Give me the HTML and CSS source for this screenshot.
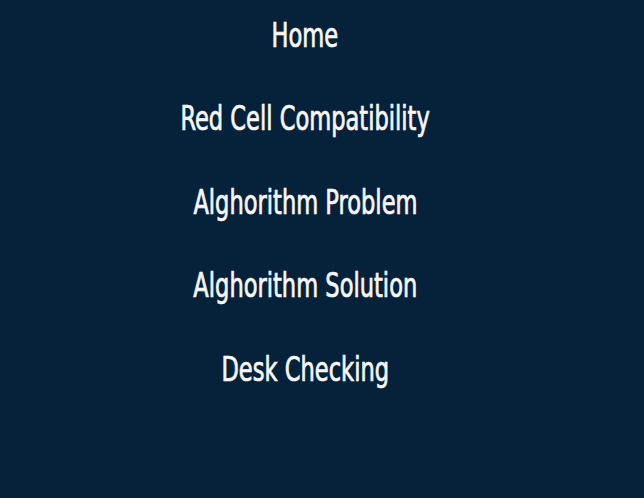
FILE: index.html
```html
<!DOCTYPE html>
<html>
<head>
<meta charset="utf-8">
<title>Menu</title>
<link rel="stylesheet" href="styles.css">
</head>
<body>
<nav class="menu">
  <ul class="menu-list">
    <li class="menu-item"><a class="menu-link" href="#">Home</a></li>
    <li class="menu-item"><a class="menu-link" href="#">Red Cell Compatibility</a></li>
    <li class="menu-item"><a class="menu-link" href="#">Alghorithm Problem</a></li>
    <li class="menu-item"><a class="menu-link" href="#">Alghorithm Solution</a></li>
    <li class="menu-item"><a class="menu-link" href="#">Desk Checking</a></li>
  </ul>
</nav>
</body>
</html>
```
FILE: styles.css
```css
html, body {
  margin: 0;
  padding: 0;
  height: 100%;
  background: #06223a;
}
.menu {
  width: 610px;
}
.menu-list {
  list-style: none;
  margin: 0;
  padding: 17.5px 0 0;
  display: flex;
  flex-direction: column;
  align-items: center;
  gap: 47.5px;
}
.menu-item {
  height: 36px;
  line-height: 36px;
  text-align: center;
}
.menu-link {
  display: inline-block;
  font-family: "DejaVu Sans Condensed", "DejaVu Sans", sans-serif;
  font-size: 33px;
  color: #f7f7f7;
  text-decoration: none;
  -webkit-text-stroke: 0.7px #f7f7f7;
  transform: scaleX(0.76);
  white-space: nowrap;
}
```
